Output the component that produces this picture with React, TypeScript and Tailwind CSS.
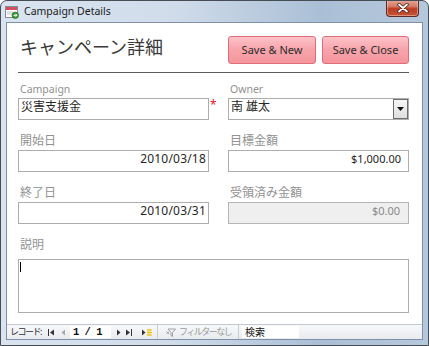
import React from "react";

function FormIcon() {
  return (
    <svg width="14" height="14" viewBox="0 0 14 14">
      <rect x="0.5" y="1.5" width="12" height="11" fill="#fff" stroke="#858c96" />
      <rect x="1" y="2" width="11" height="3" fill="#d2505e" />
      <rect x="2" y="6.5" width="6" height="1" fill="#b9c2cc" />
      <rect x="2" y="8.5" width="5" height="1" fill="#b9c2cc" />
      <circle cx="10.3" cy="10.3" r="3.2" fill="#3f9e3c" stroke="#2a6e29" strokeWidth="0.8" />
      <path d="M8.6 10.3h3.2M10.6 8.9l1.3 1.4-1.3 1.4" stroke="#fff" strokeWidth="1" fill="none" />
    </svg>
  );
}

function CloseButton() {
  return (
    <div className="-mt-px mr-[9px] flex h-[17px] w-[33px] items-center justify-center rounded-b-[4px] border border-t-0 border-[#5b2b24] bg-[linear-gradient(#e6a799,#d57b66_40%,#bb3b22_55%,#c65638)] shadow-[inset_0_0_0_1px_rgba(255,220,210,0.45)]">
      <svg width="12" height="10" viewBox="0 0 12 10">
        <path d="M2 1.5L10 8.5M10 1.5L2 8.5" stroke="#4a1e17" strokeWidth="3.4" strokeLinecap="round" />
        <path d="M2 1.5L10 8.5M10 1.5L2 8.5" stroke="#ffffff" strokeWidth="1.8" strokeLinecap="round" />
      </svg>
    </div>
  );
}

function Label({ children, latin }: { children: React.ReactNode; latin?: boolean }) {
  return (
    <div
      className={
        latin
          ? "h-[18px] pl-[2px] text-[10.5px] leading-[18px] text-[#929292]"
          : "h-[18px] pl-[2px] text-[12px] leading-[18px] text-[#929292]"
      }
    >
      {children}
    </div>
  );
}

export default function App() {
  return (
    <div className="flex h-[346px] w-[429px] flex-col overflow-hidden rounded-t-[7px] border border-[#474d55] bg-[linear-gradient(to_right,#d9e4f0,#d0dcea_40%,#aabfd6_75%,#b6c8dc)] font-['Noto_Sans','Noto_Sans_CJK_JP',sans-serif] text-[#1e1e1e]">
      {/* title bar */}
      <div className="flex h-[21px] shrink-0 items-start">
        <div className="ml-[4px] mt-[4px]">
          <FormIcon />
        </div>
        <div className="ml-[5px] mt-[3px] text-[10.5px] leading-[14px] text-[#1b1b1b]">Campaign Details</div>
        <div className="flex-1" />
        <CloseButton />
      </div>

      {/* client area */}
      <div className="mx-[5px] flex h-[318px] flex-col border border-[#7f90a6] bg-white">
        <div className="flex flex-1 flex-col pl-[11px] pr-[13px]">
          {/* header */}
          <div className="flex h-[41px] items-start pt-[13px]">
            <div className="-mt-[1px] ml-[2px] text-[18px] leading-[24px] text-[#3a3a3a]">キャンペーン詳細</div>
            <div className="flex-1" />
            <button className="h-[28px] w-[88px] rounded-[3px] border border-[#e26b78] bg-[linear-gradient(#fcc3c8,#f7a3aa_50%,#f4959d)] text-[11px] text-[#2b2b2b]">
              Save &amp; New
            </button>
            <button className="ml-[6px] h-[28px] w-[87px] rounded-[3px] border border-[#e26b78] bg-[linear-gradient(#fcc3c8,#f7a3aa_50%,#f4959d)] text-[11px] text-[#2b2b2b]">
              Save &amp; Close
            </button>
          </div>
          <div className="mt-[8px] h-px bg-[#5a5a5a]" />

          {/* fields */}
          <div className="mt-[7px] grid grid-cols-[191px_181px] gap-x-[19px] gap-y-[12px]">
            <div className="flex flex-col">
              <Label latin>Campaign</Label>
              <div className="relative h-[22px] border border-[#adadad] px-[2px] text-[12px] leading-[16px] text-[#262626]">
                災害支援金
                <span className="absolute left-[calc(100%+2px)] top-[0px] text-[12px] leading-[12px] text-[#e0202a]">*</span>
              </div>
            </div>
            <div className="flex flex-col">
              <Label latin>Owner</Label>
              <div className="flex h-[22px] border border-[#adadad] text-[12px] leading-[16px] text-[#262626]">
                <div className="flex-1 px-[2px]">南 雄太</div>
                <div className="flex w-[15px] items-center justify-center border border-[#6e6e6e] bg-[linear-gradient(#f7f7f7,#dedede)]">
                  <svg width="7" height="4" viewBox="0 0 7 4">
                    <path d="M0 0H7L3.5 4Z" fill="#111" />
                  </svg>
                </div>
              </div>
            </div>

            <div className="flex flex-col">
              <Label>開始日</Label>
              <div className="h-[22px] border border-[#adadad] pr-[2px] text-right text-[12px] leading-[16px] tracking-[0.2px] text-[#262626]">
                2010/03/18
              </div>
            </div>
            <div className="flex flex-col">
              <Label>目標金額</Label>
              <div className="h-[22px] border border-[#adadad] pr-[7px] text-right text-[11px] leading-[16px] text-[#262626]">
                $1,000.00
              </div>
            </div>

            <div className="flex flex-col">
              <Label>終了日</Label>
              <div className="h-[22px] border border-[#adadad] pr-[2px] text-right text-[12px] leading-[16px] tracking-[0.2px] text-[#262626]">
                2010/03/31
              </div>
            </div>
            <div className="flex flex-col">
              <Label>受領済み金額</Label>
              <div className="h-[22px] border border-[#b5b5b5] bg-[#efefef] pr-[8px] text-right text-[11px] leading-[16px] text-[#8a8a8a]">
                $0.00
              </div>
            </div>

            <div className="col-span-2 flex flex-col">
              <Label>説明</Label>
              <div className="mt-[5px] h-[54px] border border-[#adadad] pl-[1px] pt-[2px]">
                <div className="h-[10px] w-px bg-black" />
              </div>
            </div>
          </div>
        </div>

        {/* record navigation */}
        <div className="flex h-[15px] shrink-0 items-center border-t border-[#c4c9d0] bg-[linear-gradient(#f7f8fa,#e8ebef)] pl-[3px] text-[#333]">
          <div className="w-[38px] text-[9px] leading-[12px] tracking-[-1.5px]">レコード:</div>
          <svg width="6" height="7" viewBox="0 0 6 7">
            <rect x="0" y="0" width="1" height="7" fill="#333" />
            <path d="M6 0.5V6.5L2 3.5Z" fill="#333" />
          </svg>
          <svg className="ml-[7px]" width="4" height="7" viewBox="0 0 4 7">
            <path d="M4 0.5V6.5L0.5 3.5Z" fill="#a9a9a9" />
          </svg>
          <div className="ml-[5px] h-[12px] w-[41px] bg-white pl-[3px] font-['Liberation_Mono',monospace] text-[10.5px] font-bold leading-[12px] tracking-[-0.5px] text-[#111]">
            1 / 1
          </div>
          <svg className="ml-[6px]" width="4" height="7" viewBox="0 0 4 7">
            <path d="M0 0.5V6.5L3.5 3.5Z" fill="#333" />
          </svg>
          <svg className="ml-[5px]" width="6" height="7" viewBox="0 0 6 7">
            <path d="M0 0.5V6.5L4 3.5Z" fill="#333" />
            <rect x="5" y="0" width="1" height="7" fill="#333" />
          </svg>
          <svg className="ml-[10px]" width="11" height="7" viewBox="0 0 11 7">
            <path d="M0 0.5V6.5L3.5 3.5Z" fill="#333" />
            <path d="M5 1h5M5 3.5h5M5 6h5M6 0v7M8 0v7" stroke="#f2c21b" strokeWidth="1" />
          </svg>
          <div className="ml-[4px] h-full w-px bg-[#c9cdd3]" />
          <svg className="ml-[8px]" width="10" height="9" viewBox="0 0 10 9">
            <path d="M2 1H9.5L6.5 4.5V8.5L5 7.5V4.5Z" fill="none" stroke="#a0a0a0" strokeWidth="1" />
            <path d="M0.5 3.5L3 6M3 3.5L0.5 6" stroke="#a0a0a0" strokeWidth="1" />
          </svg>
          <div className="ml-[3px] w-[56px] text-[9px] leading-[12px] tracking-[-1.5px] text-[#9a9a9a]">フィルターなし</div>
          <div className="ml-[3px] h-full w-px bg-[#c9cdd3]" />
          <div className="ml-[3px] h-[12px] w-[57px] bg-white pl-[3px] text-[10px] leading-[12px] text-[#111]">検索</div>
        </div>
      </div>
    </div>
  );
}
